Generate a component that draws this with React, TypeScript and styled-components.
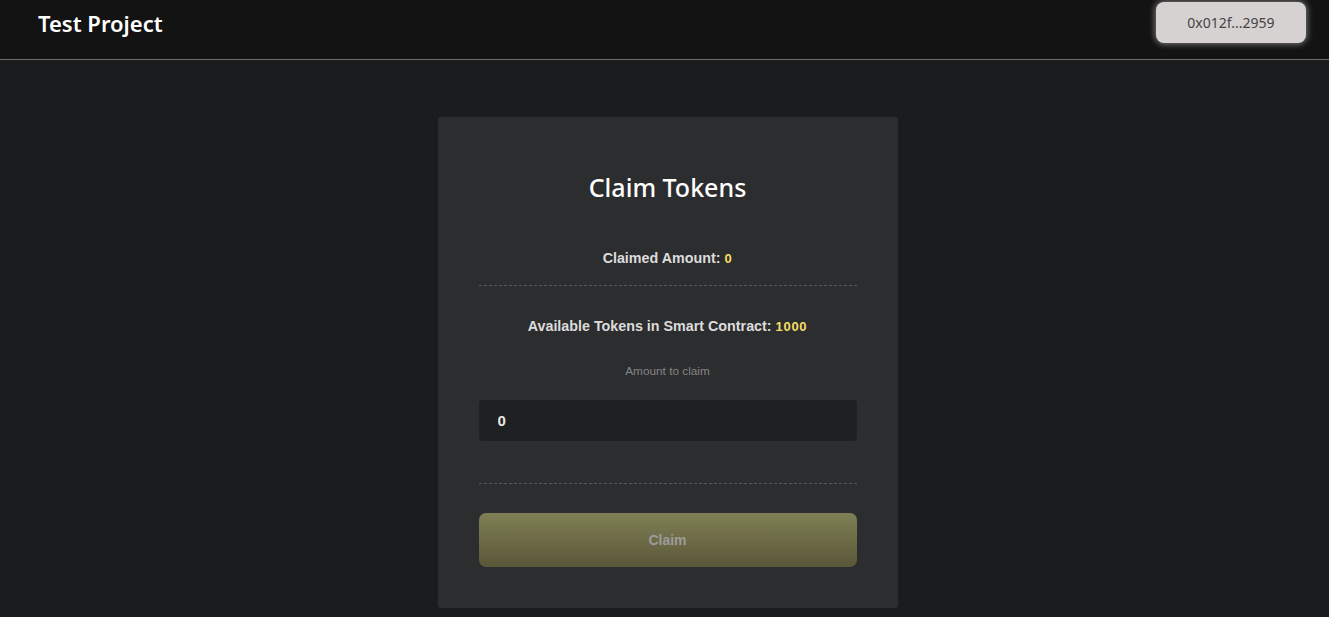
import React from "react";
import styled, { createGlobalStyle } from "styled-components";

const Global = createGlobalStyle`
  html, body { margin: 0; padding: 0; background: #1b1c1e; }
  body { font-family: "Noto Sans", "Open Sans", sans-serif; color: #fff; }
  * { box-sizing: border-box; }
`;

const Page = styled.div`
  min-height: 617px;
  background: #1b1c1e;
`;

const Header = styled.header`
  height: 60px;
  background: #131313;
  border-bottom: 1px solid #6b6b6b;
  display: flex;
  align-items: flex-start;
  justify-content: space-between;
  padding: 0 23px 0 38px;
`;

const Brand = styled.div`
  font-size: 22px;
  font-weight: 600;
  color: #fff;
  line-height: 24px;
  margin-top: 11px;
`;

const Address = styled.button`
  margin-top: 2px;
  width: 150px;
  height: 41px;
  border: none;
  border-radius: 8px;
  background: #d6d2d1;
  color: #444;
  font-family: "Noto Sans", "Open Sans", sans-serif;
  font-size: 14px;
  box-shadow: 0 0 6px 1px rgba(255, 255, 255, 0.45);
`;

const Main = styled.main`
  display: flex;
  justify-content: center;
  padding: 57px 0 0 6px;
`;

const Card = styled.section`
  width: 460px;
  background: #2c2d2f;
  border-radius: 3px;
  padding: 50px 41px 41px;
  display: flex;
  flex-direction: column;
  align-items: stretch;
`;

const Title = styled.h1`
  margin: 0;
  text-align: center;
  font-size: 25px;
  font-weight: 500;
  line-height: 40px;
  color: #fff;
`;

const Stat = styled.p<{ $top: number }>`
  margin: ${(p) => p.$top}px 0 0;
  text-align: center;
  font-family: "Liberation Sans", Arial, sans-serif;
  font-weight: 700;
  font-size: 14.3px;
  line-height: 18px;
  color: #dcdcdc;
`;

const Value = styled.span`
  color: #f7dd64;
  font-size: 13px;
  letter-spacing: 0.7px;
`;

const Divider = styled.hr<{ $top: number }>`
  margin: ${(p) => p.$top}px 0 0;
  border: none;
  border-top: 1px dashed #56575a;
  height: 0;
`;

const Label = styled.label`
  margin-top: 28px;
  text-align: center;
  font-family: "Liberation Sans", Arial, sans-serif;
  font-size: 11.8px;
  line-height: 14px;
  color: #858585;
`;

const Input = styled.input`
  margin-top: 22px;
  height: 41px;
  border: none;
  border-radius: 4px;
  background: #1f2022;
  color: #e8e8e8;
  font-family: "Liberation Sans", Arial, sans-serif;
  font-weight: 700;
  font-size: 15px;
  padding: 0 19px;
  outline: none;
`;

const ClaimButton = styled.button`
  margin-top: 29px;
  height: 54px;
  border: none;
  border-radius: 7px;
  background: linear-gradient(180deg, #7f8055 0%, #5a5638 100%);
  color: #9c9c9c;
  font-family: "Liberation Sans", Arial, sans-serif;
  font-weight: 700;
  font-size: 14px;
`;

export default function App() {
  return (
    <Page>
      <Global />
      <Header>
        <Brand>Test Project</Brand>
        <Address>0x012f...2959</Address>
      </Header>
      <Main>
        <Card>
          <Title>Claim Tokens</Title>
          <Stat $top={42}>
            Claimed Amount: <Value>0</Value>
          </Stat>
          <Divider $top={17} />
          <Stat $top={31}>
            Available Tokens in Smart Contract: <Value>1000</Value>
          </Stat>
          <Label>Amount to claim</Label>
          <Input defaultValue="0" readOnly />
          <Divider $top={42} />
          <ClaimButton>Claim</ClaimButton>
        </Card>
      </Main>
    </Page>
  );
}
